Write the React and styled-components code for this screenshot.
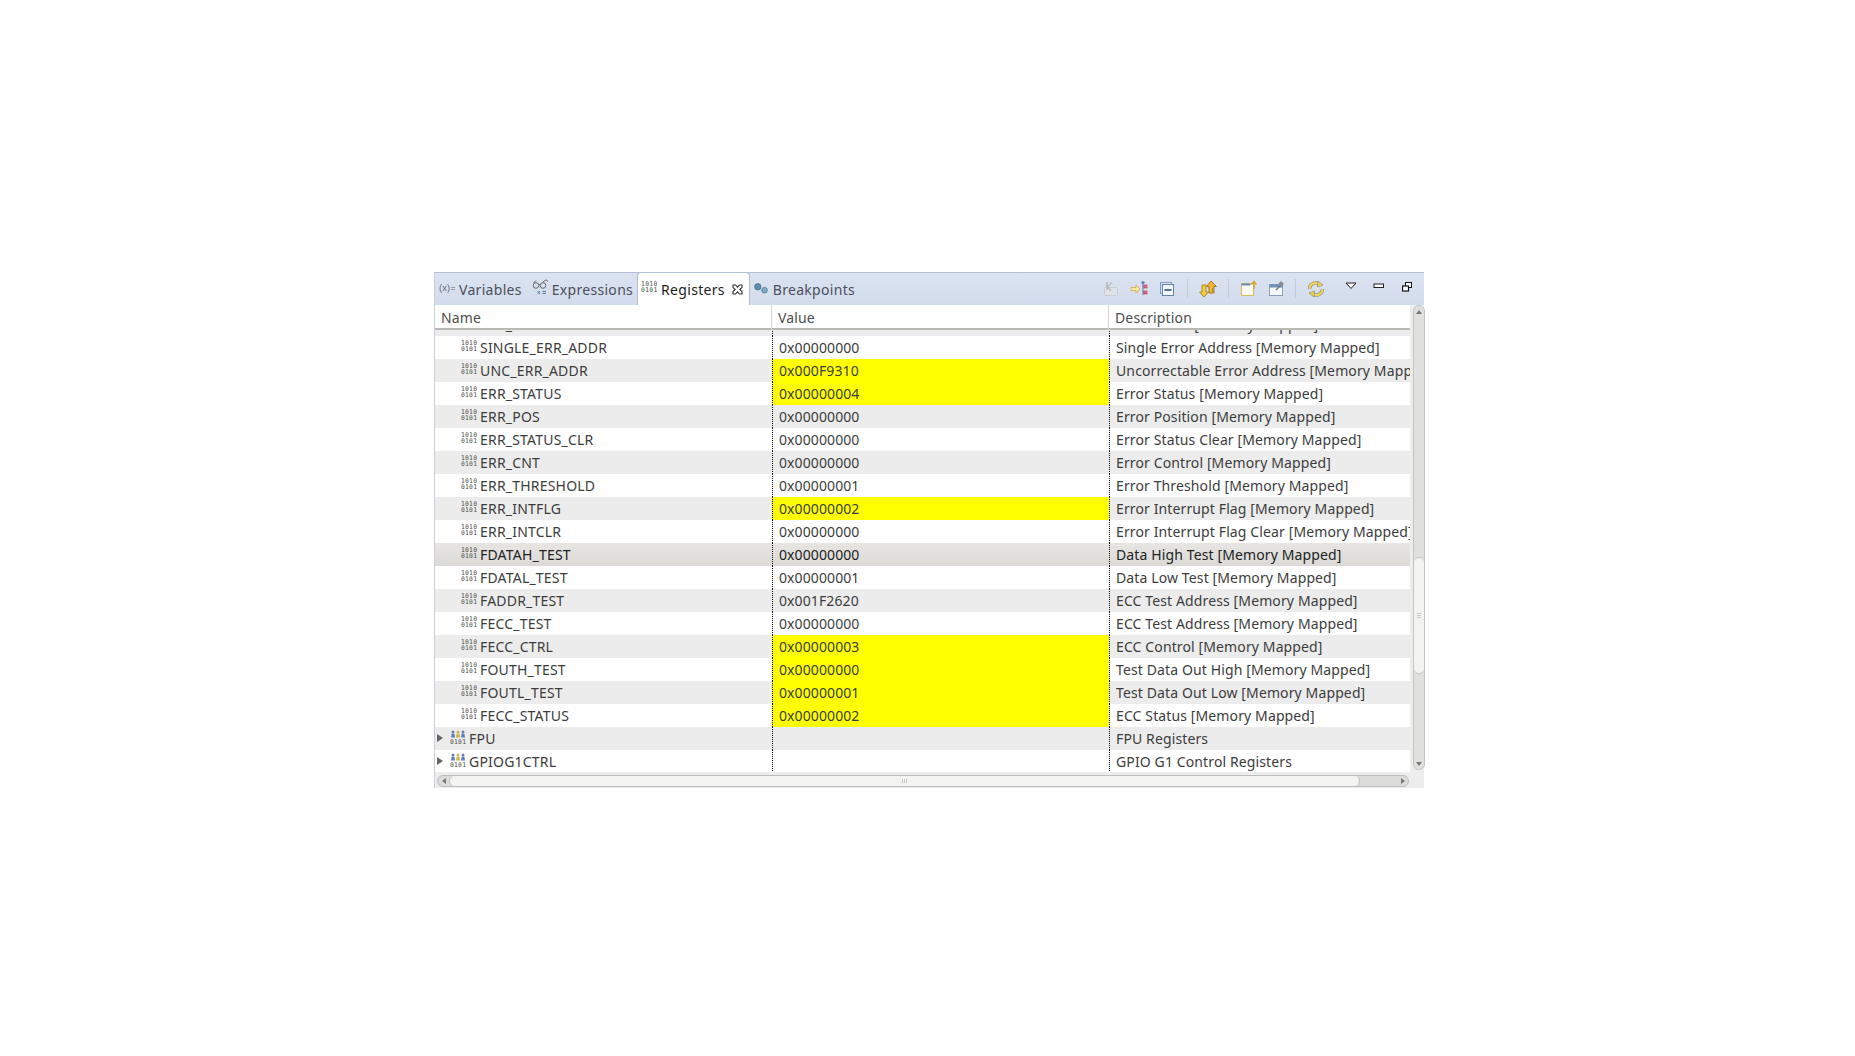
import React from 'react'
import styled, { createGlobalStyle } from 'styled-components'

const Global = createGlobalStyle`
  html, body { margin: 0; padding: 0; background: #fff; }
  body { font-family: "Noto Sans", "Open Sans", sans-serif; font-size: 14px; color: #3c3c3c; }
`

const Page = styled.div`
  height: 1056px;
  box-sizing: border-box;
  padding: 272px 0 0 434px;
  overflow: hidden;
`

const View = styled.div`
  width: 990px;
  height: 516px;
  display: flex;
  flex-direction: column;
  background: #ededed;
  border-left: 1px solid #c9cfdc;
  box-sizing: border-box;
`

const TabBar = styled.div`
  height: 33px;
  flex: none;
  display: flex;
  align-items: stretch;
  background: linear-gradient(#dbe3f1, #d3dcec);
  border-top: 1px solid #b4bed2;
  box-sizing: border-box;
`

const Tab = styled.div`
  display: flex;
  align-items: center;
  gap: ${p => p.$gap}px;
  box-sizing: border-box;
  padding: ${p => (p.$active ? '0 6px 0 3px' : `0 ${p.$right}px 0 4px`)};
  color: ${p => (p.$active ? '#1c1c1c' : '#4a4f5c')};
  background: ${p => (p.$active ? '#fff' : 'transparent')};
  border: ${p => (p.$active ? '1px solid #b4bed2' : 'none')};
  border-bottom: none;
  border-radius: ${p => (p.$active ? '4px 4px 0 0' : '0')};
  margin-top: ${p => (p.$active ? '-1px' : '0')};
  height: ${p => (p.$active ? '33px' : '32px')};
  white-space: nowrap;
  letter-spacing: .3px;
`

const Tools = styled.div`
  margin-left: auto;
  display: flex;
  align-items: center;
  padding-right: 3px;
  height: 31px;
`

const ToolSlot = styled.div`
  width: 28px;
  margin-left: ${p => p.$left || 0}px;
  margin-top: ${p => p.$top || 0}px;
  display: flex;
  justify-content: center;
  align-items: center;
`

const ToolSep = styled.div`
  width: 1px;
  height: 19px;
  background: #c4cad6;
  margin: 0 6px 0 ${p => p.$left || 6}px;
`

const Body = styled.div`
  flex: 1;
  display: flex;
  min-height: 0;
`

const TableArea = styled.div`
  width: 975px;
  flex: none;
  display: flex;
  flex-direction: column;
  overflow: hidden;
`

const Rows = styled.div`
  flex: 1;
  min-height: 0;
  overflow: hidden;
  background: #fff;
`

const HeaderRow = styled.div`
  height: 25px;
  display: grid;
  grid-template-columns: 337px 337px 1fr;
  background: #fff;
  border-bottom: 2px solid #b9b8b5;
  box-sizing: border-box;
`

const HeaderCell = styled.div`
  padding-left: ${p => p.$pad}px;
  line-height: 25px;
  color: #4d4d4d;
  letter-spacing: .15px;
  border-right: ${p => (p.$line ? '1px solid #d4d4d4' : 'none')};
`

const Row = styled.div`
  height: ${p => p.$h || 23}px;
  display: grid;
  grid-template-columns: 337px 337px 1fr;
  align-content: end;
  overflow: hidden;
  background: ${p =>
    p.$selected ? 'linear-gradient(#e6e5e2, #dbdad7)' : p.$gray ? '#ececec' : '#fff'};
  color: ${p => (p.$selected ? '#222' : '#3c3c3c')};
`

const NameCell = styled.div`
  display: flex;
  align-items: center;
  height: 23px;
  padding-left: ${p => p.$pad}px;
  white-space: nowrap;
  letter-spacing: .2px;
`

const ValueCell = styled.div`
  height: 23px;
  line-height: 23px;
  padding-left: 6px;
  border-left: 1px dotted #111;
  background: ${p => (p.$hit ? '#ffff00' : 'transparent')};
  box-sizing: border-box;
  white-space: nowrap;
  letter-spacing: .1px;
`

const DescCell = styled.div`
  height: 23px;
  line-height: 23px;
  padding-left: 6px;
  border-left: 1px dotted #111;
  white-space: nowrap;
  overflow: hidden;
  box-sizing: border-box;
  letter-spacing: .12px;
`

const HBar = styled.div`
  height: 16px;
  flex: none;
  display: flex;
  align-items: flex-start;
  padding: 3px 1px 0 2px;
  box-sizing: border-box;
`

const HTrack = styled.div`
  flex: 1;
  height: 12px;
  display: flex;
  align-items: center;
  background: #dcdcda;
  border: 1px solid #bdbdbb;
  border-radius: 6px;
  box-sizing: border-box;
`

const HThumb = styled.div`
  width: 911px;
  height: 10px;
  display: flex;
  justify-content: center;
  align-items: center;
  gap: 1px;
  background: #f3f3f1;
  border: 1px solid #bdbdbb;
  border-width: 0 1px;
  border-radius: 6px;
  box-sizing: border-box;
`

const ArrowLeft = styled.span`
  width: 11px;
  flex: none;
  display: flex;
  justify-content: center;
  &::before {
    content: '';
    border-right: 4px solid #777;
    border-top: 3px solid transparent;
    border-bottom: 3px solid transparent;
  }
`

const ArrowRight = styled.span`
  margin-left: auto;
  width: 11px;
  flex: none;
  display: flex;
  justify-content: center;
  &::before {
    content: '';
    border-left: 4px solid #777;
    border-top: 3px solid transparent;
    border-bottom: 3px solid transparent;
  }
`

const GripV = styled.i`
  width: 1px;
  height: 4px;
  background: #c8c8c6;
`

const VBar = styled.div`
  width: 12px;
  margin-left: 3px;
  height: 465px;
  flex: none;
  display: flex;
  flex-direction: column;
  align-items: stretch;
  background: #e0e0de;
  border: 1px solid #c4c4c2;
  border-radius: 6px;
  box-sizing: border-box;
`

const VThumb = styled.div`
  height: 115px;
  margin-top: ${p => p.$top}px;
  display: flex;
  flex-direction: column;
  justify-content: center;
  align-items: center;
  gap: 1px;
  background: #f3f3f1;
  border: 1px solid #c4c4c2;
  border-width: 1px 0;
  border-radius: 6px;
`

const GripH = styled.i`
  width: 4px;
  height: 1px;
  background: #c8c8c6;
`

const ArrowUp = styled.span`
  height: 11px;
  flex: none;
  display: flex;
  justify-content: center;
  align-items: center;
  &::before {
    content: '';
    border-bottom: 4px solid #777;
    border-left: 3px solid transparent;
    border-right: 3px solid transparent;
  }
`

const ArrowDown = styled.span`
  margin-top: auto;
  height: 11px;
  flex: none;
  display: flex;
  justify-content: center;
  align-items: center;
  &::before {
    content: '';
    border-top: 4px solid #777;
    border-left: 3px solid transparent;
    border-right: 3px solid transparent;
  }
`

const Twisty = styled.span`
  width: 0;
  height: 0;
  flex: none;
  border-left: 6px solid #666;
  border-top: 4px solid transparent;
  border-bottom: 4px solid transparent;
  margin-right: 7px;
  margin-top: -2px;
`

const IconSvg = styled.svg`
  flex: none;
  margin-right: ${p => p.$right || 0}px;
  margin-left: ${p => p.$left || 0}px;
  margin-top: ${p => p.$top || 0}px;
`

const RegIcon = () => (
  <IconSvg width="16" height="14" viewBox="0 0 16 14" $right={3} $top={-4}>
    <text x="0" y="6" fontSize="6.4" fontFamily="DejaVu Sans Mono" fill="#4c4c4c">1010</text>
    <text x="0" y="12" fontSize="6.4" fontFamily="DejaVu Sans Mono" fill="#4c4c4c">0101</text>
  </IconSvg>
)

const GroupIcon = () => (
  <IconSvg width="16" height="15" viewBox="0 0 16 15" $right={3} $top={-3}>
    <circle cx="3" cy="2" r="1.5" fill="#5a7fbe" />
    <circle cx="8" cy="2" r="1.5" fill="#d8b13e" />
    <circle cx="13" cy="2" r="1.5" fill="#5a7fbe" />
    <path d="M1 7.5 L1.6 3.8 H4.4 L5 7.5Z" fill="#5a7fbe" />
    <path d="M6 7.5 L6.6 3.8 H9.4 L10 7.5Z" fill="#d8b13e" />
    <path d="M11 7.5 L11.6 3.8 H14.4 L15 7.5Z" fill="#5a7fbe" />
    <text x="0" y="14" fontSize="6.4" fontFamily="DejaVu Sans Mono" fill="#4c4c4c">0101</text>
  </IconSvg>
)

const VariablesIcon = () => (
  <IconSvg width="16" height="12" viewBox="0 0 16 12" $top={-3}>
    <text x="0" y="9" fontSize="9" fontFamily="Liberation Sans" fill="#5f6472">(x)=</text>
  </IconSvg>
)

const ExpressionsIcon = () => (
  <IconSvg width="17" height="16" viewBox="0 0 17 16" $top={-4} fill="none" stroke="#6b6b6b" strokeWidth="1">
    <circle cx="4" cy="6.5" r="2.8" />
    <circle cx="11" cy="6.5" r="2.8" />
    <path d="M6.8 6 Q7.5 5 8.2 6 M1.5 4 L4 1.5 M11 3 L14 0.8 L16 2.5" />
    <path d="M5.5 12 L8 15 M8 12 L5.5 15 M10.5 12.5 H14 M10.5 14.5 H14" stroke="#5d7aa8" />
  </IconSvg>
)

const BreakpointsIcon = () => (
  <IconSvg width="14" height="12" viewBox="0 0 14 12" $right={1}>
    <circle cx="3.8" cy="3.8" r="3.2" fill="#5b8fae" stroke="#41677f" strokeWidth=".7" />
    <circle cx="10.5" cy="7.2" r="2.8" fill="#7fb0cc" stroke="#41677f" strokeWidth=".7" />
  </IconSvg>
)

const CloseIcon = () => (
  <IconSvg width="11" height="11" viewBox="0 0 11 11" $left={6} fill="#fff" stroke="#333" strokeWidth="1.1">
    <path d="M1 1 H3.5 L5.5 3.2 L7.5 1 H10 V3.5 L7.8 5.5 L10 7.5 V10 H7.5 L5.5 7.8 L3.5 10 H1 V7.5 L3.2 5.5 L1 3.5Z" />
  </IconSvg>
)

const Tool = {
  skip: (
    <svg width="18" height="18" viewBox="0 0 18 18" fill="none">
      <rect x="2.5" y="7.5" width="13" height="8" rx="1" fill="#dfe3e8" stroke="#c9ccd0" />
      <path d="M5 2 L5 10 M5 7 L10 2.5 M5.5 7 L9 11" stroke="#bcbcbc" strokeWidth="1.6" />
    </svg>
  ),
  toRow: (
    <svg width="18" height="16" viewBox="0 0 18 16" fill="none">
      <path d="M1 6.5 H6 V4 L10 8 L6 12 V9.5 H1Z" fill="#f7e9a8" stroke="#d4b04c" strokeWidth=".9" />
      <path d="M13 1 V14 M13 5 H15 M13 11 H15" stroke="#54709c" />
      <rect x="11.5" y="0.5" width="3" height="2" fill="#54709c" />
      <rect x="14" y="4" width="3" height="3" fill="#e0708a" stroke="#b63b55" strokeWidth=".6" />
      <rect x="14" y="10" width="3" height="3" fill="#e0708a" stroke="#b63b55" strokeWidth=".6" />
    </svg>
  ),
  collapse: (
    <svg width="16" height="16" viewBox="0 0 16 16" fill="none">
      <rect x="1.5" y="1.5" width="11" height="11" fill="#dce6f2" stroke="#7f9bbd" />
      <rect x="3.5" y="3.5" width="11" height="11" fill="#f4f7fb" stroke="#5f83ac" />
      <path d="M5.5 9 H12.5" stroke="#2c4f7c" strokeWidth="1.6" />
    </svg>
  ),
  sync: (
    <svg width="20" height="18" viewBox="0 0 20 18">
      <path d="M6 17 L1.5 12 H4 V5 H8 V12 H10.5Z" fill="#eec94f" stroke="#a98315" strokeWidth=".9" />
      <path d="M13 1 L18.5 6.5 H16 V13 H11 V6.5 H8.5Z" fill="#f2b53c" stroke="#a46f10" strokeWidth=".9" />
      <path d="M14 9 h1 M14 11 h1" stroke="#3d69a8" />
    </svg>
  ),
  newView: (
    <svg width="18" height="17" viewBox="0 0 18 17" fill="none">
      <rect x="1.5" y="3.5" width="12" height="12" fill="#fbfbf4" stroke="#d9bd5b" />
      <rect x="1.5" y="3.5" width="9" height="2" fill="#6f8fb8" />
      <path d="M14 9 V2.5 M11.5 4.5 L14 1.5 L16.5 4.5" stroke="#d6a732" strokeWidth="1.5" />
    </svg>
  ),
  pin: (
    <svg width="18" height="17" viewBox="0 0 18 17" fill="none">
      <rect x="1.5" y="4.5" width="13" height="11" fill="#f7f9fc" stroke="#8ca0bd" />
      <rect x="1.5" y="4.5" width="13" height="3" fill="#6f8fb8" />
      <path d="M8 10 L12 6" stroke="#777" strokeWidth="1.4" />
      <path d="M10.5 3.5 L13 1 L16 4 L13.5 6.5Z" fill="#8a8a8a" />
    </svg>
  ),
  refresh: (
    <svg width="18" height="18" viewBox="0 0 18 18" fill="none">
      <path d="M2.5 9 A6 6 0 0 1 12.5 4.5" stroke="#8f8f80" strokeWidth="3.4" />
      <path d="M15.5 9 A6 6 0 0 1 5.5 13.5" stroke="#8f8f80" strokeWidth="3.4" />
      <path d="M2.5 9 A6 6 0 0 1 12.5 4.5" stroke="#f2d750" strokeWidth="2" />
      <path d="M15.5 9 A6 6 0 0 1 5.5 13.5" stroke="#f2d750" strokeWidth="2" />
      <path d="M11 1 L16 5 L10.5 7Z" fill="#f2d750" stroke="#7d7d6c" strokeWidth=".6" />
      <path d="M7 17 L2 13 L7.5 11Z" fill="#f2d750" stroke="#7d7d6c" strokeWidth=".6" />
    </svg>
  ),
  menu: (
    <svg width="12" height="8" viewBox="0 0 12 8">
      <path d="M1 1 H11 L6 6.5Z" fill="#fff" stroke="#222" strokeWidth="1" />
    </svg>
  ),
  min: (
    <svg width="12" height="6" viewBox="0 0 12 6">
      <rect x="1" y="1" width="9.5" height="3.5" fill="#fff" stroke="#222" />
    </svg>
  ),
  max: (
    <svg width="10" height="10" viewBox="0 0 10 10">
      <rect x="3.5" y="0.5" width="6" height="5" fill="#fff" stroke="#111" />
      <rect x="0.5" y="4" width="6" height="5" fill="#fff" stroke="#111" strokeWidth="1.2" />
    </svg>
  ),
}

const rows = [
  ['SINGLE_ERR_ADDR', '0x00000000', 'Single Error Address [Memory Mapped]'],
  ['UNC_ERR_ADDR', '0x000F9310', 'Uncorrectable Error Address [Memory Mapped]', true],
  ['ERR_STATUS', '0x00000004', 'Error Status [Memory Mapped]', true],
  ['ERR_POS', '0x00000000', 'Error Position [Memory Mapped]'],
  ['ERR_STATUS_CLR', '0x00000000', 'Error Status Clear [Memory Mapped]'],
  ['ERR_CNT', '0x00000000', 'Error Control [Memory Mapped]'],
  ['ERR_THRESHOLD', '0x00000001', 'Error Threshold [Memory Mapped]'],
  ['ERR_INTFLG', '0x00000002', 'Error Interrupt Flag [Memory Mapped]', true],
  ['ERR_INTCLR', '0x00000000', 'Error Interrupt Flag Clear [Memory Mapped]'],
  ['FDATAH_TEST', '0x00000000', 'Data High Test [Memory Mapped]'],
  ['FDATAL_TEST', '0x00000001', 'Data Low Test [Memory Mapped]'],
  ['FADDR_TEST', '0x001F2620', 'ECC Test Address [Memory Mapped]'],
  ['FECC_TEST', '0x00000000', 'ECC Test Address [Memory Mapped]'],
  ['FECC_CTRL', '0x00000003', 'ECC Control [Memory Mapped]', true],
  ['FOUTH_TEST', '0x00000000', 'Test Data Out High [Memory Mapped]', true],
  ['FOUTL_TEST', '0x00000001', 'Test Data Out Low [Memory Mapped]', true],
  ['FECC_STATUS', '0x00000002', 'ECC Status [Memory Mapped]', true],
]

export default function App() {
  return (
    <Page>
      <Global />
      <View>
        <TabBar>
          <Tab $gap={4} $right={6}><VariablesIcon />Variables</Tab>
          <Tab $gap={3} $right={4}><ExpressionsIcon />Expressions</Tab>
          <Tab $active $gap={1}><RegIcon />Registers<CloseIcon /></Tab>
          <Tab $gap={4} $right={6}><BreakpointsIcon />Breakpoints</Tab>
          <Tools>
            <ToolSlot>{Tool.skip}</ToolSlot>
            <ToolSlot>{Tool.toRow}</ToolSlot>
            <ToolSlot>{Tool.collapse}</ToolSlot>
            <ToolSep />
            <ToolSlot>{Tool.sync}</ToolSlot>
            <ToolSep />
            <ToolSlot>{Tool.newView}</ToolSlot>
            <ToolSlot>{Tool.pin}</ToolSlot>
            <ToolSep $left={4} />
            <ToolSlot>{Tool.refresh}</ToolSlot>
            <ToolSlot $left={7} $top={-5}>{Tool.menu}</ToolSlot>
            <ToolSlot $top={-5}>{Tool.min}</ToolSlot>
            <ToolSlot $top={-3}>{Tool.max}</ToolSlot>
          </Tools>
        </TabBar>
        <Body>
          <TableArea>
            <HeaderRow>
              <HeaderCell $pad={6} $line>Name</HeaderCell>
              <HeaderCell $pad={6} $line>Value</HeaderCell>
              <HeaderCell $pad={6}>Description</HeaderCell>
            </HeaderRow>
            <Rows>
              <Row $h={6} $gray>
                <NameCell $pad={45}>ECC_CTRL</NameCell>
                <ValueCell />
                <DescCell>ECC Enable [Memory Mapped]</DescCell>
              </Row>
              {rows.map(([name, value, desc, hit], i) => (
                <Row key={name} $gray={i % 2 === 1} $selected={name === 'FDATAH_TEST'}>
                  <NameCell $pad={26}><RegIcon />{name}</NameCell>
                  <ValueCell $hit={hit}>{value}</ValueCell>
                  <DescCell>{desc}</DescCell>
                </Row>
              ))}
              <Row $gray>
                <NameCell $pad={2}><Twisty /><GroupIcon />FPU</NameCell>
                <ValueCell />
                <DescCell>FPU Registers</DescCell>
              </Row>
              <Row>
                <NameCell $pad={2}><Twisty /><GroupIcon />GPIOG1CTRL</NameCell>
                <ValueCell />
                <DescCell>GPIO G1 Control Registers</DescCell>
              </Row>
            </Rows>
            <HBar>
              <HTrack>
                <ArrowLeft />
                <HThumb><GripV /><GripV /><GripV /></HThumb>
                <ArrowRight />
              </HTrack>
            </HBar>
          </TableArea>
          <VBar>
            <ArrowUp />
            <VThumb $top={240}><GripH /><GripH /><GripH /></VThumb>
            <ArrowDown />
          </VBar>
        </Body>
      </View>
    </Page>
  )
}
